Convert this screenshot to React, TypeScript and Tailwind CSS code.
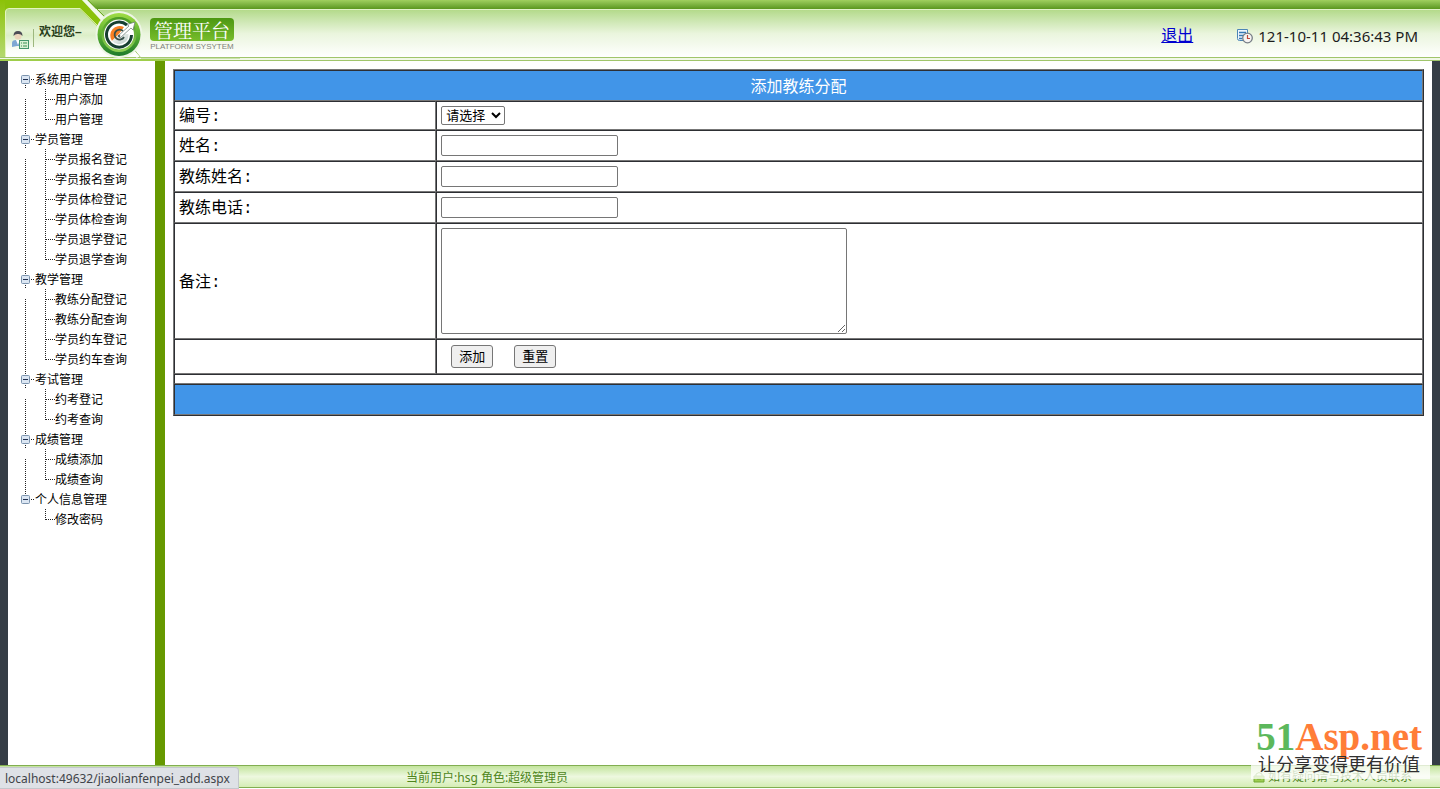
import React from "react";

type Group = { title: string; items: string[] };

const groups: Group[] = [
  { title: "系统用户管理", items: ["用户添加", "用户管理"] },
  {
    title: "学员管理",
    items: ["学员报名登记", "学员报名查询", "学员体检登记", "学员体检查询", "学员退学登记", "学员退学查询"],
  },
  { title: "教学管理", items: ["教练分配登记", "教练分配查询", "学员约车登记", "学员约车查询"] },
  { title: "考试管理", items: ["约考登记", "约考查询"] },
  { title: "成绩管理", items: ["成绩添加", "成绩查询"] },
  { title: "个人信息管理", items: ["修改密码"] },
];

const dots = { stroke: "#222", strokeWidth: 1, strokeDasharray: "1 1" };

function GroupIcon({ first, last }: { first: boolean; last: boolean }) {
  return (
    <svg className="h-5 w-5 shrink-0" viewBox="0 0 20 20" aria-hidden="true">
      {!first && <line x1="10.5" y1="0" x2="10.5" y2="5" {...dots} />}
      {!last && <line x1="10.5" y1="16" x2="10.5" y2="20" {...dots} />}
      <line x1="16" y1="10.5" x2="20" y2="10.5" {...dots} />
      <rect x="6.5" y="6.5" width="8" height="8" rx="1" fill="#dbe6f3" stroke="#7b93ad" />
      <line x1="8" y1="10.5" x2="13" y2="10.5" stroke="#203050" />
    </svg>
  );
}

function BranchIcon({ first, last, trunk }: { first: boolean; last: boolean; trunk: boolean }) {
  return (
    <svg className="h-5 w-10 shrink-0" viewBox="0 0 40 20" aria-hidden="true">
      {trunk && <line x1="10.5" y1={first ? 10 : 0} x2="10.5" y2="20" {...dots} />}
      <line x1="30.5" y1="0" x2="30.5" y2={last ? 11 : 20} {...dots} />
      <line x1="31" y1="10.5" x2="40" y2="10.5" {...dots} />
    </svg>
  );
}

function Sidebar() {
  return (
    <nav className="w-[157px] shrink-0 border-r-10 border-[#669900] bg-white pt-2 pl-[7px] text-xs leading-[22px] text-black">
      <ul>
        {groups.map((g, gi) => {
          const lastGroup = gi === groups.length - 1;
          return (
            <li key={g.title}>
              <a href="#" className="flex h-5 whitespace-nowrap">
                <GroupIcon first={gi === 0} last={lastGroup} />
                {g.title}
              </a>
              <ul>
                {g.items.map((item, i) => (
                  <li key={item}>
                    <a href="#" className="flex h-5 whitespace-nowrap">
                      <BranchIcon first={i === 0} last={i === g.items.length - 1} trunk={!lastGroup} />
                      {item}
                    </a>
                  </li>
                ))}
              </ul>
            </li>
          );
        })}
      </ul>
    </nav>
  );
}

function HeaderArt() {
  return (
    <svg className="absolute top-0 left-0 h-[61px] w-[240px]" viewBox="0 0 240 61" aria-hidden="true">
      <defs>
        <linearGradient id="panel" x1="0" y1="0" x2="0" y2="1">
          <stop offset="0" stopColor="#b5da8b" />
          <stop offset="0.45" stopColor="#e3f2d2" />
          <stop offset="0.55" stopColor="#dcefc8" />
          <stop offset="0.85" stopColor="#fbfdf8" />
          <stop offset="1" stopColor="#ffffff" />
        </linearGradient>
        <linearGradient id="ring" x1="0" y1="0" x2="0" y2="1">
          <stop offset="0" stopColor="#a0dc45" />
          <stop offset="0.5" stopColor="#5bb030" />
          <stop offset="1" stopColor="#1d7a2c" />
        </linearGradient>
        <linearGradient id="ringInner" x1="0" y1="0" x2="0" y2="1">
          <stop offset="0" stopColor="#4a9a22" />
          <stop offset="1" stopColor="#8fd055" />
        </linearGradient>
        <linearGradient id="steel" x1="0" y1="0" x2="1" y2="1">
          <stop offset="0" stopColor="#ffffff" />
          <stop offset="1" stopColor="#b9c9c4" />
        </linearGradient>
        <linearGradient id="edge" x1="0" y1="0" x2="0" y2="1">
          <stop offset="0" stopColor="#8cc208" />
          <stop offset="1" stopColor="#b4d96e" />
        </linearGradient>
      </defs>
      <path d="M0 0H82L108 27V34H0Z" fill="#8bc20b" />
      <path d="M0 0H5V57H0Z" fill="url(#edge)" />
      <path d="M5 57V12Q5 9 9 9H80L105 34V57Z" fill="url(#panel)" />
      <path d="M5.5 57V12Q5.5 8.500 9 8.500H80L103 31" fill="none" stroke="#e4f5be" />
      <path d="M82 0H87L116 29L111 31Z" fill="#f3faea" />
      <path d="M88 0L114 26" stroke="#6ca822" />
      <path d="M132 47L141 58H240" fill="none" stroke="#a5cb72" />
      <path d="M129 48L138 57" stroke="#fff" strokeWidth="3" />
      <path d="M0 60H180" stroke="#9fce4b" strokeWidth="2" />
      <circle cx="119" cy="34.500" r="23.500" fill="#eef6e5" />
      <circle cx="119" cy="34.500" r="21.500" fill="url(#ring)" />
      <circle cx="119" cy="34.500" r="17.500" fill="url(#ringInner)" />
      <circle cx="119" cy="34.500" r="15" fill="#fff" />
      <path d="M127 25A12.500 12.500 0 1 0 131.500 35" fill="none" stroke="#173f31" strokeWidth="3" />
      <path d="M124 27A9.500 9.500 0 0 0 112 41L119 34Z" fill="#f98023" />
      <path d="M112 41A9.500 9.500 0 0 0 128.500 34L119 34Z" fill="url(#steel)" />
      <path d="M123 31A5 5 0 1 0 124 37" fill="none" stroke="#38504a" strokeWidth="1.800" />
      <path d="M118 36L129 26L127 24.500L135 22L133 30L131 28L120 38Z" fill="#fff" stroke="#64766f" strokeWidth="0.700" />
      <circle cx="119" cy="36" r="1.300" fill="#53645f" />
    </svg>
  );
}

function UserIcon() {
  return (
    <svg className="h-5 w-5 shrink-0" viewBox="0 0 20 20" aria-hidden="true">
      <path d="M1 17V13Q1 10 5 10H9Q12 10 12 13V16H6Z" fill="#7ea7d3" />
      <path d="M5 10L7 15L9 10Z" fill="#fff" />
      <circle cx="7" cy="6" r="3.500" fill="#ebd4bb" />
      <path d="M2.500 6Q2.500 1 7 1Q11.500 1 11.500 6Q9.500 3.500 7 4Q4.500 3.500 2.500 6" fill="#4c4c55" />
      <rect x="8.500" y="10.500" width="9" height="8" fill="#d9f2d6" stroke="#43966e" />
      <path d="M10 13H11M12 13H16M10 16H11M12 16H16" stroke="#3c8f55" />
    </svg>
  );
}

function ClockIcon() {
  return (
    <svg className="h-4 w-4 shrink-0" viewBox="0 0 16 16" aria-hidden="true">
      <path d="M.5 1.500H10.500V12.500H2.500Q.5 12.500.5 10.500Z" fill="#eff6fd" stroke="#4c86b6" />
      <path d="M2 4.500H9M2 7.500H7M2 10.500H5" stroke="#377ab5" strokeWidth="1.500" />
      <circle cx="10.500" cy="10" r="4.800" fill="#f6f4f2" stroke="#767d86" strokeWidth="1.300" />
      <path d="M10.500 7V10.500H13" fill="none" stroke="#bf473b" strokeWidth="1.200" />
    </svg>
  );
}

function Header() {
  return (
    <header className="relative flex h-[61px] shrink-0 flex-col">
      <div className="h-[9px] bg-linear-to-b from-[#a0d05f] to-[#5a971d]" />
      <div className="h-12 border-t border-[#e1f2c9] bg-linear-to-b from-[#b4da8b] via-[#eaf5dd] to-white" />
      <div className="h-1 border-y border-[#a0c56b] bg-[#f1f8e7]" />
      <HeaderArt />
      <div className="absolute inset-x-0 top-0 flex h-[61px] items-start">
        <div className="pt-[30px] pl-[11px]">
          <UserIcon />
        </div>
        <div className="mt-[29px] ml-[2px] h-[18px] w-px bg-[#9db77e]" />
        <p className="w-[116px] pt-[22px] pl-[5px] text-xs leading-5 font-bold text-[#28401a]">欢迎您–</p>
        <div className="w-[84px] pt-[18px]">
          <h1 className="rounded bg-linear-to-b from-[#4c9711] to-[#77bd2b] text-center font-[KaiTi,'Noto_Serif_CJK_SC','Noto_Sans_CJK_SC',sans-serif] text-[19px] leading-[23px] text-white">
            管理平台
          </h1>
          <p className="text-center font-['Liberation_Sans',sans-serif] text-[8px] leading-[12px] whitespace-nowrap text-[#7d8179]">
            PLATFORM SYSYTEM
          </p>
        </div>
        <div className="ml-auto flex items-center pt-6 pr-[22px] leading-6">
          <a href="#" className="text-base text-[#0000d0] underline">退出</a>
          <span className="ml-[44px] flex items-center gap-[5px] font-['Noto_Sans',sans-serif] text-[15px] leading-6 text-[#1c1c1c]">
            <ClockIcon />
            <time>121-10-11 04:36:43 PM</time>
          </span>
        </div>
      </div>
    </header>
  );
}

const cell = "border border-t-[#2d2f33] border-l-[#2d2f33] border-r-[#777] border-b-[#777] px-1 py-0";
const box = "block border border-[#767676] bg-white rounded-[2px]";
const btn = "h-[23px] rounded-[3px] border border-[#767676] bg-[#efefef] px-[7px] text-[13px] leading-[22px] text-black";

function FieldLabel({ id, text }: { id: string; text: string }) {
  return (
    <label htmlFor={id} className="block pt-[2px]">
      {text}
      <span className="font-['Liberation_Mono',monospace]">:</span>
    </label>
  );
}

function TextRow({ id, label }: { id: string; label: string }) {
  return (
    <tr className="h-[31px]">
      <td className={cell}>
        <FieldLabel id={id} text={label} />
      </td>
      <td className={cell}>
        <input id={id} type="text" className={`${box} h-[21px] w-[177px] px-1 text-[13px]`} />
      </td>
    </tr>
  );
}

function AssignForm() {
  return (
    <form onSubmit={(e: React.FormEvent) => e.preventDefault()}>
      <table className="w-full table-fixed border-separate border-spacing-0 border border-t-[#777] border-l-[#777] border-r-[#2d2f33] border-b-[#2d2f33] text-base leading-5 text-black">
        <colgroup>
          <col className="w-[21%]" />
          <col />
        </colgroup>
        <tbody>
          <tr className="h-[31px]">
            <th colSpan={2} className={`${cell} bg-[#4195e8] text-center font-normal text-white`}>
              <span className="block pt-[2px]">添加教练分配</span>
            </th>
          </tr>
          <tr className="h-[29px]">
            <td className={cell}>
              <FieldLabel id="number" text="编号" />
            </td>
            <td className={cell}>
              <select id="number" className={`${box} h-[19px] w-16 text-[13px] leading-4`}>
                <option>请选择</option>
              </select>
            </td>
          </tr>
          <TextRow id="name" label="姓名" />
          <TextRow id="coach" label="教练姓名" />
          <TextRow id="phone" label="教练电话" />
          <tr className="h-[116px]">
            <td className={cell}>
              <FieldLabel id="remark" text="备注" />
            </td>
            <td className={cell}>
              <textarea id="remark" className={`${box} h-[106px] w-[406px] p-[2px] text-[13px]`} />
            </td>
          </tr>
          <tr className="h-[35px]">
            <td className={cell} />
            <td className={cell}>
              <div className="flex gap-[21px] pl-[10px]">
                <button type="submit" className={btn}>添加</button>
                <button type="reset" className={btn}>重置</button>
              </div>
            </td>
          </tr>
          <tr className="h-[10px]">
            <td colSpan={2} className={cell} />
          </tr>
          <tr className="h-[31px]">
            <td colSpan={2} className={`${cell} bg-[#4195e8]`} />
          </tr>
        </tbody>
      </table>
    </form>
  );
}

function Footer() {
  return (
    <footer className="relative h-6 shrink-0 bg-white">
      <div className="flex h-[23px] justify-between border-y border-[#82ae51] bg-linear-to-b from-[#c3e49c] via-[#edf8df] to-[#d5edb5] pr-[28px] pl-[406px] font-['Noto_Sans','Noto_Sans_CJK_SC',sans-serif] text-xs leading-6 text-[#4e861b]">
        <span>当前用户:hsg 角色:超级管理员</span>
        <span className="flex items-center gap-[3px]">
          <svg className="h-3 w-3" viewBox="0 0 12 12" aria-hidden="true">
            <path d="M1 5H11V11H1Z" fill="#9ccc51" stroke="#72a932" />
            <path d="M3 5V3Q6 0 9 3V5M4 8H8" fill="none" stroke="#72a932" />
          </svg>
          如有疑问请与技术人员联系
        </span>
      </div>
      <div className="absolute bottom-0 left-0 h-[22px] rounded-tr border border-l-0 border-[#c3c7cc] bg-[#dee1e6] pr-2 pl-[5px] font-['Noto_Sans',sans-serif] text-xs leading-[22px] text-[#3f4349]">
        localhost:49632/jiaolianfenpei_add.aspx
      </div>
      <div className="absolute right-[10px] bottom-[10px] bg-white/75 pr-[8px] pb-1 pl-[5px] text-center">
        <p className="font-['Liberation_Serif',serif] text-[39px] leading-[36px] font-bold text-[#ff7d38]">
          <span className="text-[#5cb85c]">51</span>Asp.net
        </p>
        <p className="text-[18px] leading-[20px] whitespace-nowrap text-[#303030]">让分享变得更有价值</p>
      </div>
    </footer>
  );
}

export default function App() {
  return (
    <div className="flex min-h-screen flex-col bg-white font-['Liberation_Sans','Noto_Sans_CJK_SC',sans-serif]">
      <Header />
      <div className="flex grow border-x-8 border-[#353d45]">
        <Sidebar />
        <main className="min-w-0 grow p-2">
          <AssignForm />
        </main>
      </div>
      <Footer />
    </div>
  );
}
